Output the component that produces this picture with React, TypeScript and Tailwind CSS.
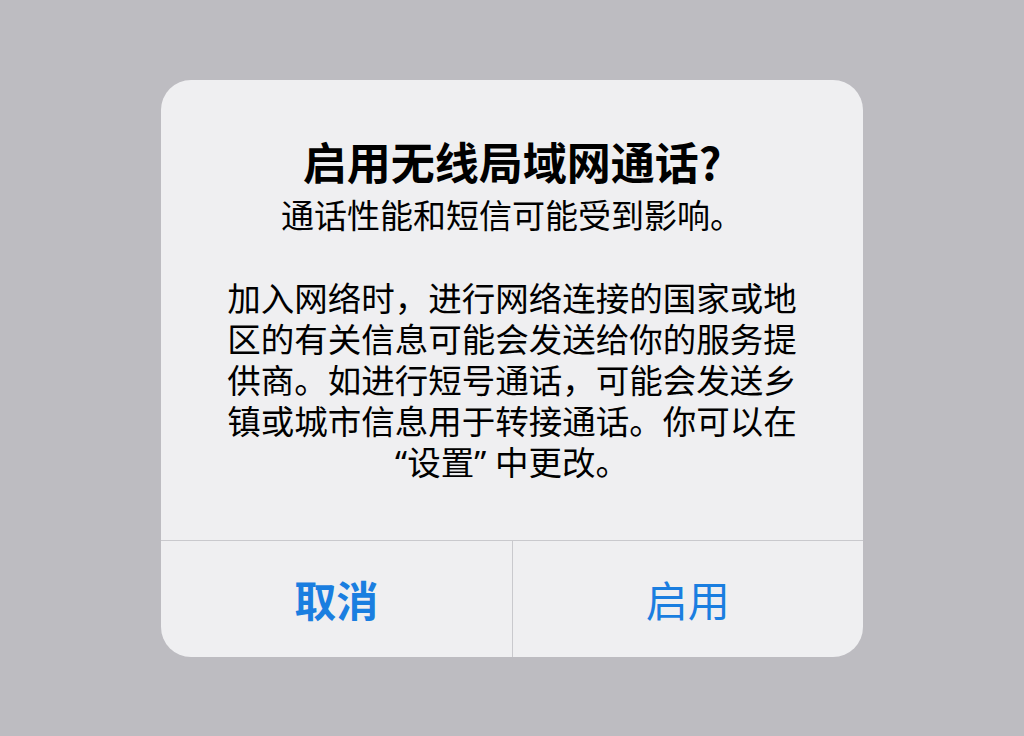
const bodyLines = [
  "加入网络时，进行网络连接的国家或地",
  "区的有关信息可能会发送给你的服务提",
  "供商。如进行短号通话，可能会发送乡",
  "镇或城市信息用于转接通话。你可以在",
]

// Latin-width curly quotes, as the system alert renders them
const Quote = ({ children }: { children: string }) => (
  <span style={{ fontFamily: '"Noto Sans", sans-serif' }}>{children}</span>
)

const App = () => {
  return (
    <div
      className="flex h-screen w-full items-center justify-center bg-[#bdbcc1]"
      style={{ fontFamily: '"Noto Sans CJK SC", "Noto Sans", sans-serif' }}
    >
      <div className="flex w-[702px] flex-col overflow-hidden rounded-[30px] bg-[#efeff1]">
        <div className="px-[40px] pt-[55px] pb-[57px] text-center text-black">
          <h1 className="text-[44px] leading-[52px] font-bold">启用无线局域网通话?</h1>
          <p className="mt-[7px] text-[33px] leading-[41px]">通话性能和短信可能受到影响。</p>
          <p className="mt-[41px] text-[33.5px] leading-[41px] whitespace-nowrap">
            {bodyLines.map((line, i) => (
              <span key={i}>
                {line}
                <br />
              </span>
            ))}
            <Quote>“</Quote>设置<Quote>” </Quote>中更改。
          </p>
        </div>
        <div className="flex h-[117px] border-t border-[#c9c9cd]">
          <button className="flex flex-1 items-center justify-center text-[42px] font-bold text-[#1a7ee0]">
            取消
          </button>
          <div className="w-px bg-[#c9c9cd]" />
          <button className="flex flex-1 items-center justify-center text-[42px] text-[#1a7ee0]">
            启用
          </button>
        </div>
      </div>
    </div>
  )
}

export default App
